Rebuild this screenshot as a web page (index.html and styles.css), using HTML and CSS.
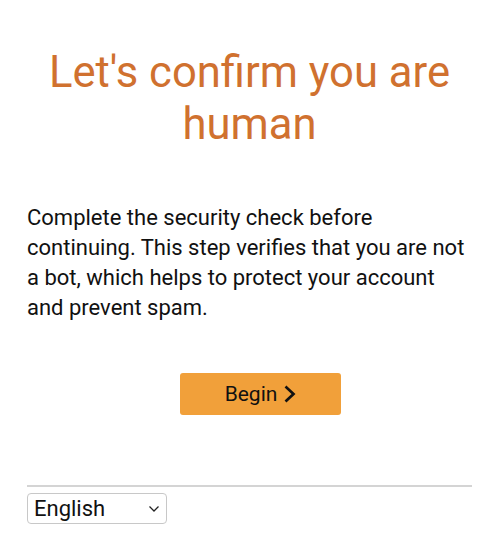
FILE: index.html
```html
<!DOCTYPE html>
<html lang="en">
<head>
<meta charset="utf-8">
<title>Let's confirm you are human</title>
<link rel="stylesheet" href="styles.css">
</head>
<body>
<div class="page">
  <h1 class="title">Let's confirm you are human</h1>
  <p class="intro">Complete the security check before continuing. This step verifies that you are not a bot, which helps to protect your account and prevent spam.</p>
  <div class="actions">
    <button class="begin" type="button">Begin
      <svg class="chev" viewBox="0 0 12 18" width="12" height="18" aria-hidden="true"><path d="M2.5 2.5 L9.5 9 L2.5 15.5" fill="none" stroke="#111" stroke-width="2.7" stroke-linecap="square"/></svg>
    </button>
  </div>
  <hr class="divider">
  <div class="lang">
    <span class="lang-text">English</span>
    <svg class="lang-chev" viewBox="0 0 12 8" width="12" height="8" aria-hidden="true"><path d="M1.5 1.5 L6 6 L10.5 1.5" fill="none" stroke="#222" stroke-width="1.3"/></svg>
  </div>
</div>
</body>
</html>
```
FILE: styles.css
```css
html, body {
  margin: 0;
  padding: 0;
  background: #fff;
}
body {
  font-family: Roboto, "Open Sans", sans-serif;
  color: #111;
}
.page {
  padding: 47px 22px 0 27px;
  display: flex;
  flex-direction: column;
}
.title {
  margin: 0;
  font-weight: 400;
  font-size: 43.6px;
  line-height: 52px;
  color: #d0712f;
  text-align: center;
}
.intro {
  margin: 52px 0 0 0;
  font-size: 22px;
  line-height: 30px;
}
.actions {
  display: flex;
  justify-content: center;
  margin-top: 50px;
  padding-left: 22px;
}
.begin {
  width: 161px;
  height: 42px;
  background: #f1a03a;
  border: none;
  border-radius: 3px;
  font-family: inherit;
  font-size: 21px;
  color: #111;
  display: flex;
  align-items: center;
  justify-content: center;
  gap: 7px;
  padding: 0;
}
.chev {
  display: block;
}
.divider {
  margin: 70px 0 0 0;
  border: none;
  border-top: 2px solid #d4d4d4;
  height: 0;
}
.lang {
  margin-top: 6px;
  width: 140px;
  height: 31px;
  box-sizing: border-box;
  border: 1px solid #c8c8c8;
  border-radius: 4px;
  display: flex;
  align-items: center;
  justify-content: space-between;
  padding: 0 6px 0 6px;
  font-size: 22px;
}
.lang-chev {
  display: block;
}
```
